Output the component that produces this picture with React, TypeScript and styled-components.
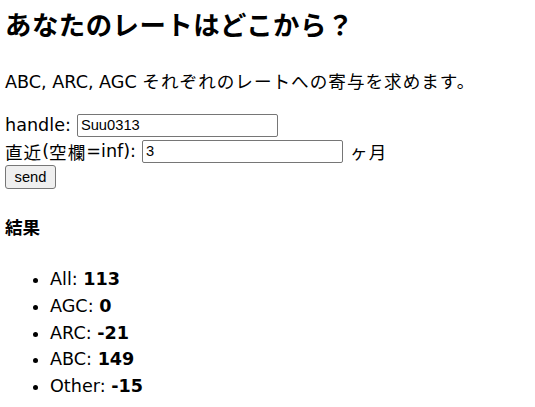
import React from 'react';
import styled, { createGlobalStyle } from 'styled-components';

const Global = createGlobalStyle`
  body {
    margin: 0;
    background: #ffffff;
    color: #000000;
    font-family: "DejaVu Sans", "Noto Sans CJK JP", sans-serif;
    font-size: 17.6px;
  }
`;

const Page = styled.div`
  padding: 0 5px;
`;

const Title = styled.h2`
  margin: 6px 0 0;
  font-size: 26.4px;
  line-height: 40px;
  font-weight: bold;
  letter-spacing: 0.5px;
`;

// Japanese runs are set a little wider, as in the reference
const Ja = styled.span`
  letter-spacing: 1px;
`;

const Lead = styled.p`
  margin: 23px 0 0;
  line-height: 27px;
`;

const Form = styled.form`
  margin-top: 16px;
  display: flex;
  flex-direction: column;
  align-items: flex-start;
`;

const Row = styled.label`
  display: flex;
  align-items: center;
  height: 26px;
  white-space: pre;
`;

const Input = styled.input`
  box-sizing: border-box;
  width: 201px;
  height: 23px;
  margin: 0 0 0 6px;
  padding: 1px 3px;
  border: 1px solid #767676;
  border-radius: 2px;
  font-family: "Liberation Sans", Arial, sans-serif;
  font-size: 14.7px;
  color: #000;
`;

const Unit = styled.span`
  margin-left: 7px;
  letter-spacing: 1px;
`;

const Button = styled.button`
  box-sizing: border-box;
  margin-top: 1px;
  width: 51px;
  height: 24px;
  padding: 0;
  background: #efefef;
  border: 1px solid #767676;
  border-radius: 3px;
  font-family: "Liberation Sans", Arial, sans-serif;
  font-size: 14.7px;
  color: #000;
`;

const Heading = styled.h4`
  margin: 26px 0 0;
  font-size: 17.6px;
  line-height: 27px;
  font-weight: bold;
`;

const List = styled.ul`
  margin: 24px 0 0;
  padding-left: 45px;
`;

const Item = styled.li`
  line-height: 26.8px;
`;

const results: [string, number][] = [
  ['All', 113],
  ['AGC', 0],
  ['ARC', -21],
  ['ABC', 149],
  ['Other', -15],
];

export default function App(): React.ReactElement {
  return (
    <Page>
      <Global />
      <Title>あなたのレートはどこから？</Title>
      <Lead>
        ABC, ARC, AGC <Ja>それぞれのレートへの寄与を求めます。</Ja>
      </Lead>
      <Form onSubmit={(e) => e.preventDefault()}>
        <Row>
          handle:
          <Input type="text" defaultValue="Suu0313" />
        </Row>
        <Row>
          <Ja>直近</Ja>(<Ja>空欄</Ja>=inf):
          <Input type="text" defaultValue="3" />
          <Unit>ヶ月</Unit>
        </Row>
        <Button type="submit">send</Button>
      </Form>
      <Heading>結果</Heading>
      <List>
        {results.map(([name, value]) => (
          <Item key={name}>
            {name}: <b>{value}</b>
          </Item>
        ))}
      </List>
    </Page>
  );
}
